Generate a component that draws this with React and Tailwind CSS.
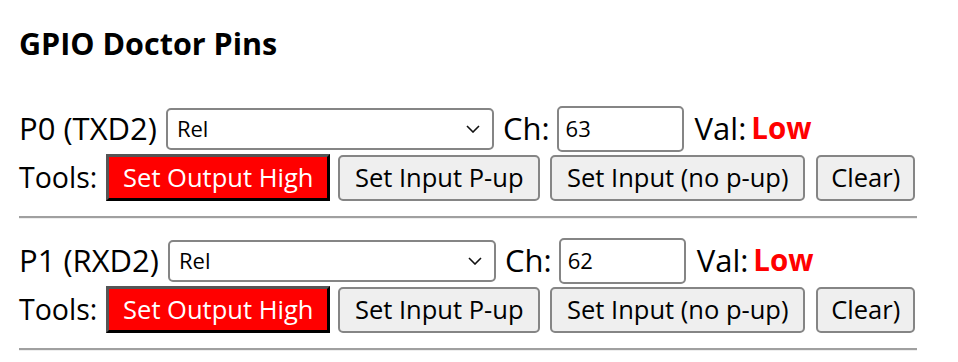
import React from 'react';

const pins = [
  { name: 'P0 (TXD2)', mode: 'Rel', ch: '63', val: 'Low' },
  { name: 'P1 (RXD2)', mode: 'Rel', ch: '62', val: 'Low' },
];

const Chevron = () => (
  <svg width="14" height="8" viewBox="0 0 14 8" fill="none" className="absolute right-[12px] top-1/2 -translate-y-1/2">
    <path d="M1 1l6 6 6-6" stroke="#111" strokeWidth="1.6" />
  </svg>
);

const GrayButton = ({ children, className }) => (
  <button
    className={`h-[46px] rounded-[5px] border-2 border-[#858585] bg-[#efefef] text-[25.5px] leading-none text-black ${className}`}
  >
    {children}
  </button>
);

const PinRow = ({ pin }) => {
  return (
    <div>
      {/* --- PIN SETTINGS --- */}
      <div className="flex h-[47px] items-center text-[31px]">
        <span>{pin.name}</span>
        <div className="relative ml-[9px] flex h-[42px] w-[328px] items-center rounded-[5px] border-2 border-[#858585] bg-white pl-[9px] text-[22px]">
          {pin.mode}
          <Chevron />
        </div>
        <span className="ml-[9px]">Ch:</span>
        <div className="ml-[7px] flex h-[46px] w-[127px] items-center rounded-[5px] border-2 border-[#858585] bg-white pl-[7px] text-[22px]">
          {pin.ch}
        </div>
        <span className="ml-[11px]">Val:</span>
        <span className="ml-[5px] text-[29.5px] font-bold text-[#ff0000]">{pin.val}</span>
      </div>

      {/* --- TOOLS --- */}
      <div className="mt-[1px] flex h-[49px] items-center">
        <span className="text-[28.5px]">Tools:</span>
        <button className="ml-[9px] h-[47px] w-[224px] border-[3px] border-t-[#555555] border-l-[#555555] border-r-black border-b-black bg-[#ff0000] text-[25.5px] leading-none text-white">
          Set Output High
        </button>
        <GrayButton className="ml-[8px] w-[202px]">Set Input P-up</GrayButton>
        <GrayButton className="ml-[10px] w-[255px]">Set Input (no p-up)</GrayButton>
        <GrayButton className="ml-[11px] w-[99px]">Clear)</GrayButton>
      </div>

      <div className="mt-[14px] mb-[18px] border-t-2 border-b border-t-[#a0a0a0] border-b-[#eeeeee]" />
    </div>
  );
};

export default function App() {
  return (
    <div className="min-h-[362px] bg-white pt-[24px] pl-[19px] text-black" style={{ fontFamily: '"Open Sans", "Noto Sans", sans-serif' }}>
      <div className="w-[898px]">
        <h3 className="mb-[43px] text-[30.5px] font-bold leading-[38px]">GPIO Doctor Pins</h3>
        {pins.map((pin) => (
          <PinRow key={pin.name} pin={pin} />
        ))}
      </div>
    </div>
  );
}
